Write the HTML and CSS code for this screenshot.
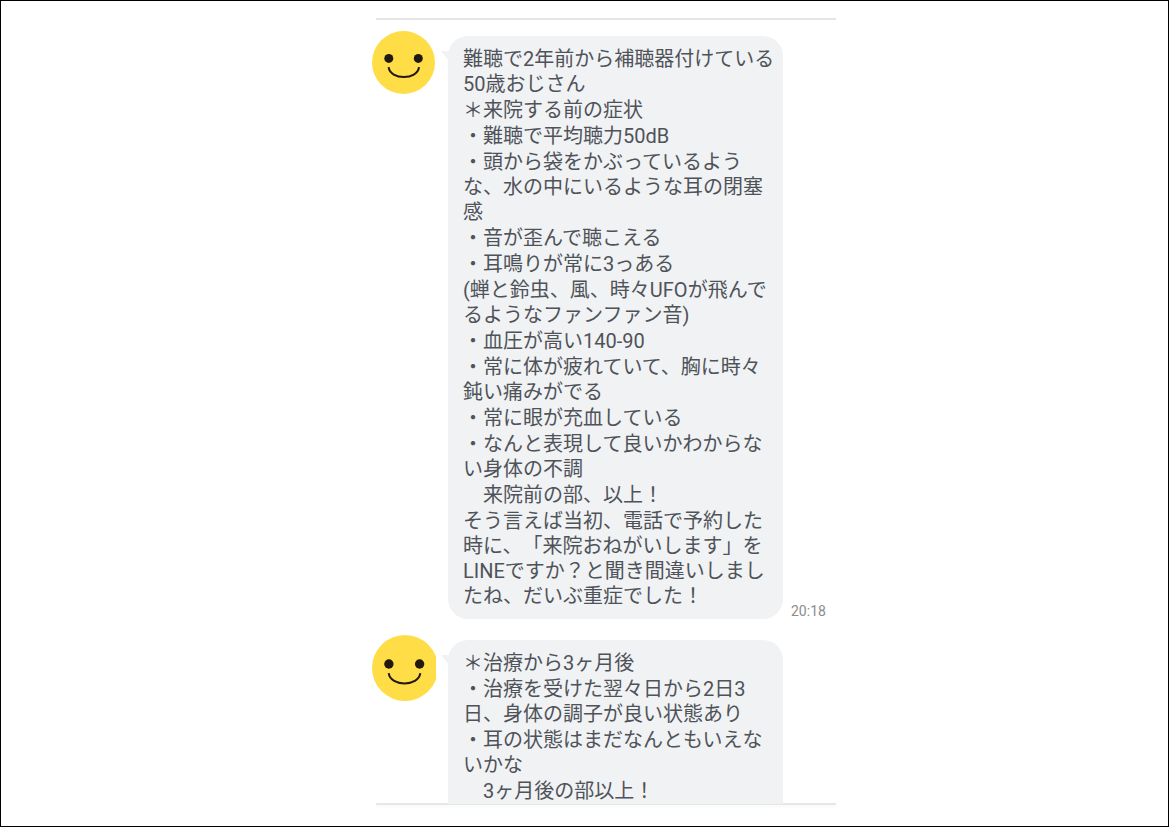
FILE: index.html
```html
<!DOCTYPE html>
<html lang="ja">
<head>
<meta charset="utf-8">
<meta name="viewport" content="width=device-width, initial-scale=1">
<title>トーク</title>
<link rel="stylesheet" href="styles.css">
</head>
<body class="page">
<main class="chat">
  <article class="message">
    <svg class="avatar" viewBox="0 0 63 63" aria-hidden="true">
      <circle cx="31.5" cy="31.5" r="31.5" fill="#ffdd47"/>
      <circle cx="16.8" cy="27.4" r="4.5" fill="#21180f"/>
      <circle cx="46.3" cy="27.4" r="4.5" fill="#21180f"/>
      <path d="M16.6 36.2C18.2 49.4 45.4 49.4 47 36.2" fill="none" stroke="#21180f" stroke-width="2"/>
    </svg>
    <div class="bubble">
      <p class="line">難聴で2年前から補聴器付けている<br>50歳おじさん</p>
      <p class="line">＊来院する前の症状</p>
      <p class="line">・難聴で平均聴力50dB</p>
      <p class="line">・頭から袋をかぶっているよう<br>な、水の中にいるような耳の閉塞<br>感</p>
      <p class="line">・音が歪んで聴こえる</p>
      <p class="line">・耳鳴りが常に3っある</p>
      <p class="line">(蝉と鈴虫、風、時々UFOが飛んで<br>るようなファンファン音)</p>
      <p class="line">・血圧が高い140-90</p>
      <p class="line">・常に体が疲れていて、胸に時々<br>鈍い痛みがでる</p>
      <p class="line">・常に眼が充血している</p>
      <p class="line">・なんと表現して良いかわからな<br>い身体の不調</p>
      <p class="line">　来院前の部、以上！</p>
      <p class="line">そう言えば当初、電話で予約した<br>時に、「来院おねがいします」を<br>LINEですか？と聞き間違いしまし<br>たね、だいぶ重症でした！</p>
    </div>
    <time class="time" datetime="20:18">20:18</time>
  </article>
  <article class="message message--last">
    <svg class="avatar avatar--large" viewBox="0 0 64 66" aria-hidden="true">
      <circle cx="33" cy="33" r="33" fill="#ffdd47"/>
      <circle cx="16.9" cy="29" r="4.7" fill="#21180f"/>
      <circle cx="47.6" cy="29" r="4.7" fill="#21180f"/>
      <path d="M16.7 38.2C18.4 52 46.6 52 48.3 38.2" fill="none" stroke="#21180f" stroke-width="2"/>
    </svg>
    <div class="bubble bubble--cut">
      <p class="line">＊治療から3ヶ月後</p>
      <p class="line">・治療を受けた翌々日から2日3<br>日、身体の調子が良い状態あり</p>
      <p class="line">・耳の状態はまだなんともいえな<br>いかな</p>
      <p class="line">　3ヶ月後の部以上！</p>
    </div>
  </article>
</main>
</body>
</html>
```
FILE: styles.css
```css
* {
  box-sizing: border-box;
}

.page {
  margin: 0;
  min-height: 100vh;
  display: grid;
  grid-template-columns: 371fr 464px 332fr;
  align-items: start;
  padding-top: 17px;
  border: 1px solid #000;
  background: #fff;
  color: #4f5359;
  font-family: Roboto, "Noto Sans CJK JP", sans-serif;
}

.chat {
  grid-column: 2;
}

.chat::before,
.chat::after {
  content: "";
  display: block;
  height: 2px;
  margin-left: 4px;
  background: #e6e6e7;
}

.chat::after {
  box-shadow: 0 2px 3px #f6f7f8;
}

.message {
  display: flex;
  align-items: flex-start;
  padding-top: 11px;
}

.message--last {
  padding-top: 16px;
}

.avatar {
  flex: none;
  width: 63px;
  height: 63px;
  margin-right: 13px;
}

.avatar--large {
  width: 64px;
  height: 66px;
  margin-right: 12px;
}

.bubble {
  position: relative;
  flex: none;
  width: 335px;
  margin-top: 5px;
  padding: 11px 0 10px 15px;
  border-radius: 20px;
  background: #f0f2f4;
}

.bubble::before {
  content: "";
  position: absolute;
  top: 15px;
  left: -7px;
  width: 9px;
  height: 11px;
  background: #f0f2f4;
  clip-path: polygon(0 0, 100% 0, 100% 100%);
}

.bubble--cut {
  padding-bottom: 0;
  margin-bottom: -1px;
  border-radius: 20px 20px 0 0;
}

.line {
  margin: 0;
  font-size: 20px;
  font-weight: 400;
  line-height: 25px;
  white-space: nowrap;
  text-spacing-trim: space-all;
}

.line + .line {
  margin-top: 1px;
}

.time {
  align-self: flex-end;
  margin-left: 8px;
  color: #8b8c8f;
  font-size: 14px;
  line-height: 15px;
}
```
